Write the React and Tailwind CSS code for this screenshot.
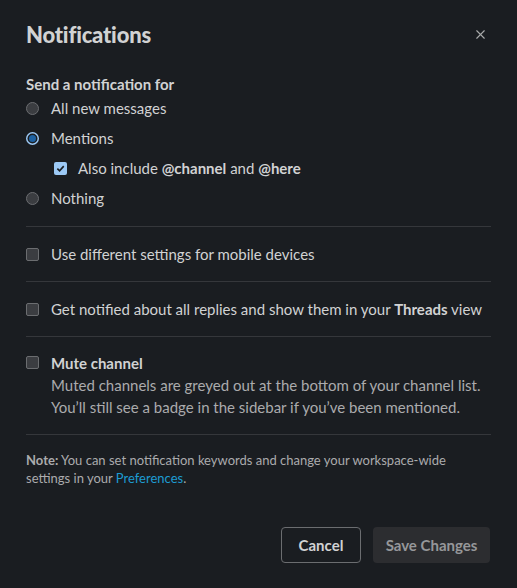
import { X } from 'lucide-react';

function Radio({ checked }) {
  return checked ? (
    <span className="w-[13px] h-[13px] rounded-full bg-[#9cc9f5] border-[2px] border-[#9cc9f5] flex items-center justify-center shrink-0">
      <span className="w-[7px] h-[7px] rounded-full bg-[#1d62a3] ring-[1.5px] ring-[#1a1d21]" />
    </span>
  ) : (
    <span className="w-[13px] h-[13px] rounded-full bg-[#3b3d41] border border-[#6b6d70] shrink-0" />
  );
}

function Checkbox({ checked }) {
  return checked ? (
    <span className="w-[13px] h-[13px] rounded-[2px] bg-[#9cc9f5] flex items-center justify-center shrink-0">
      <svg width="9" height="9" viewBox="0 0 10 10" fill="none">
        <path d="M1.5 5.2L4 7.6L8.6 2.4" stroke="#1a1d21" strokeWidth="1.8" />
      </svg>
    </span>
  ) : (
    <span className="block w-[13px] h-[13px] rounded-[2px] bg-[#3b3d41] border border-[#6b6d70] shrink-0" />
  );
}

export default function App() {
  return (
    <div className="w-[517px] h-[588px] bg-[#1a1d21] text-[#d1d2d3] font-['Lato',sans-serif] px-[26px] pt-[20px]">
      <div className="flex items-center justify-between h-[28px] pr-[3px]">
        <h1 className="text-[22px] font-black tracking-[-0.2px] text-[#d1d2d3]">Notifications</h1>
        <X className="w-[15px] h-[15px] text-[#a9aaab]" strokeWidth={1.8} />
      </div>

      <div className="mt-[26px] text-[15px] font-bold leading-[20px]">Send a notification for</div>
      <div className="flex flex-col text-[15px]">
        <label className="flex items-center gap-[12px] h-[30px] -mt-[1px]">
          <Radio />
          <span>All new messages</span>
        </label>
        <label className="flex items-center gap-[12px] h-[30px]">
          <Radio checked />
          <span>Mentions</span>
        </label>
        <label className="flex items-center gap-[11px] h-[30px] pl-[28px]">
          <Checkbox checked />
          <span>
            Also include <b>@channel</b> and <b>@here</b>
          </span>
        </label>
        <label className="flex items-center gap-[12px] h-[30px]">
          <Radio />
          <span>Nothing</span>
        </label>
      </div>

      <div className="border-t border-[#35373b] mt-[13px]" />
      <label className="flex items-center gap-[12px] h-[54px] text-[15px]">
        <Checkbox />
        <span>Use different settings for mobile devices</span>
      </label>
      <div className="border-t border-[#35373b]" />
      <label className="flex items-center gap-[12px] h-[54px] text-[15px]">
        <Checkbox />
        <span>
          Get notified about all replies and show them in your <b>Threads</b> view
        </span>
      </label>
      <div className="border-t border-[#35373b]" />
      <div className="flex gap-[12px] pt-[15px] pb-[16px] text-[15px]">
        <div className="pt-[4px]">
          <Checkbox />
        </div>
        <div className="leading-[22px]">
          <div className="font-bold">Mute channel</div>
          <div className="text-[#ababad]">Muted channels are greyed out at the bottom of your channel list.</div>
          <div className="text-[#ababad]">You’ll still see a badge in the sidebar if you’ve been mentioned.</div>
        </div>
      </div>
      <div className="border-t border-[#35373b]" />

      <p className="mt-[16px] text-[13px] leading-[18px] text-[#ababad]">
        <b>Note:</b> You can set notification keywords and change your workspace-wide
        <br />
        settings in your <span className="text-[#1d9bd1]">Preferences</span>.
      </p>

      <div className="flex justify-end gap-[12px] mt-[40px] pr-[1px]">
        <button className="h-[36px] w-[80px] rounded-[4px] border border-[#6b6d70] text-[15px] font-bold text-[#d1d2d3]">
          Cancel
        </button>
        <button className="h-[36px] w-[117px] rounded-[4px] bg-[#2c2d30] text-[15px] font-bold text-[#96979a]">
          Save Changes
        </button>
      </div>
    </div>
  );
}
